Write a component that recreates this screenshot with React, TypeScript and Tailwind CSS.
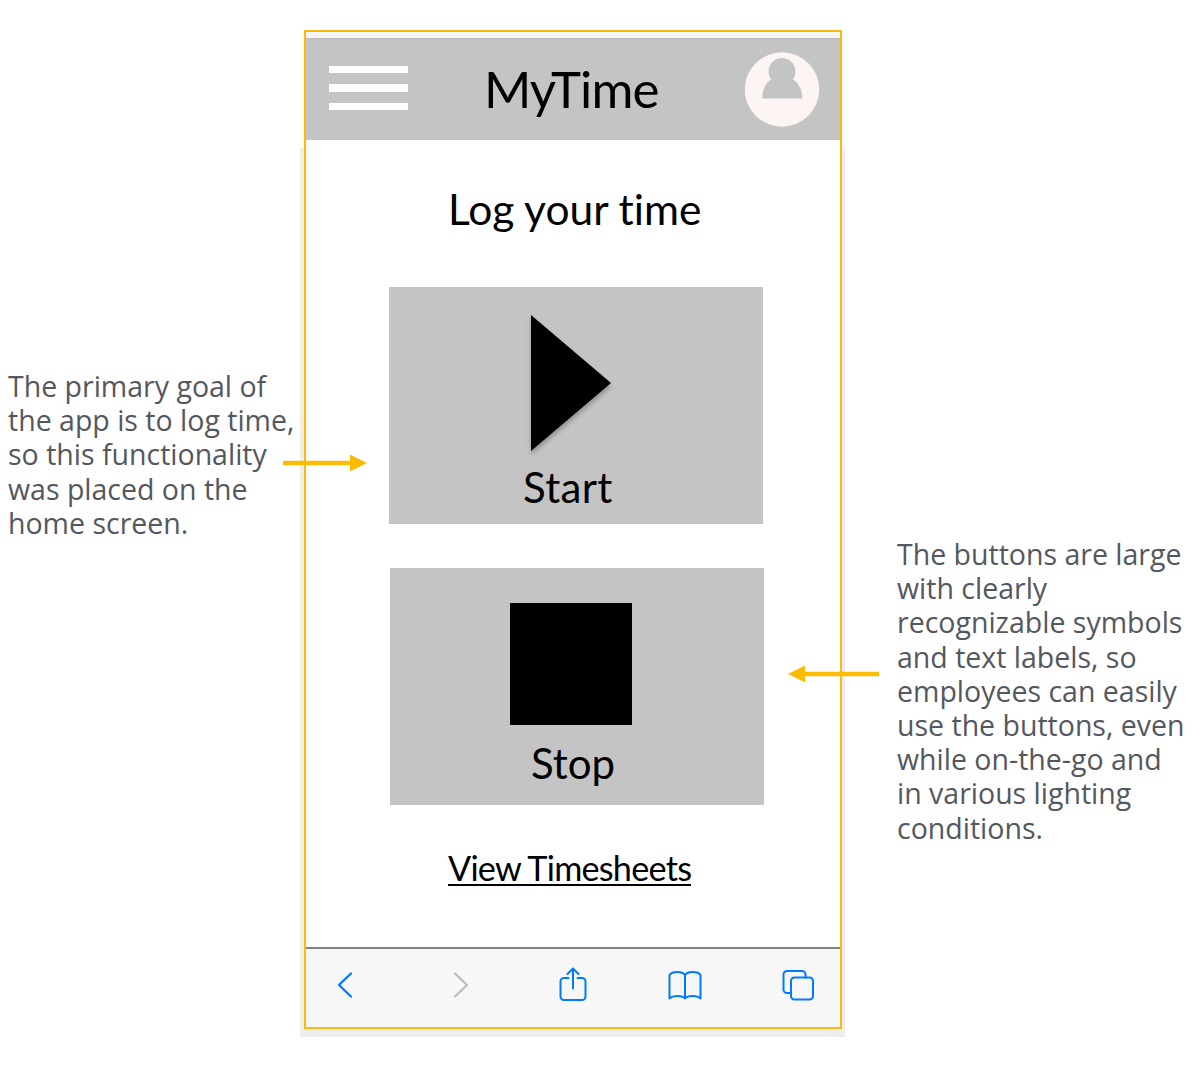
import type { ReactNode } from "react";

function Annotation({ lines }: { lines: string[] }) {
  return (
    <p className="font-['Open_Sans',sans-serif] text-[28.5px] leading-[34.2px] whitespace-nowrap text-[#54585e]">
      {lines.map((line) => (
        <span key={line} className="block">{line}</span>
      ))}
    </p>
  );
}

function Arrow({ className, flip = false }: { className: string; flip?: boolean }) {
  return (
    <svg className={`absolute z-10 ${className}`} width={flip ? 91 : 84} height="18" viewBox={flip ? "0 0 91 18" : "0 0 84 18"} fill="#fbbc04">
      {flip ? <path d="M0 9 17 .5v6.2H91v4.6H17v6.2z" /> : <path d="M84 9 67 .5v6.2H0v4.6h67v6.2z" />}
    </svg>
  );
}

function Header() {
  return (
    <header className="flex h-[102px] items-center border-t border-[#bababa] bg-[#c4c4c4] pr-[20px] pl-[23px]">
      <div className="mb-[3px] flex w-[79px] flex-col gap-[11px]">
        <span className="h-[7.5px] bg-white" />
        <span className="h-[7.5px] bg-white" />
        <span className="h-[7.5px] bg-white" />
      </div>
      <h1 className="mb-[1px] ml-[76px] text-[51px] leading-[60px] tracking-[-0.9px]">MyTime</h1>
      <svg className="ml-auto" width="75" height="75" viewBox="0 0 75 75">
        <circle cx="37" cy="37.5" r="37.2" fill="#fdf5f4" />
        <circle cx="37" cy="19.5" r="13.5" fill="#c4c4c4" />
        <path d="M17.3 46.500C17.300 36 22.500 28.500 27.500 27 L46.500 27C51.500 28.500 57.300 36 57.300 46.500z" fill="#c4c4c4" />
      </svg>
    </header>
  );
}

function ActionButton({ label, children, className }: { label: string; children: ReactNode; className: string }) {
  return (
    <button className={`flex h-[237px] w-[374px] flex-col items-start bg-[#c4c4c4] text-[42px] leading-[50px] ${className}`}>
      {children}
      <span>{label}</span>
    </button>
  );
}

function BrowserBar() {
  const line = { fill: "none", stroke: "#007aff", strokeWidth: 2, strokeLinecap: "round", strokeLinejoin: "round" } as const;
  return (
    <nav className="mt-auto flex h-[80px] items-start border-t-2 border-[#808080] bg-[#f7f7f7] pt-[17px] pl-[31px]">
      <svg width="18" height="38" viewBox="0 0 18 38" {...line} strokeWidth={2.3}><path d="M14 7.500 2 19 14 30.500" /></svg>
      <svg className="ml-[97px]" width="18" height="38" viewBox="0 0 18 38" {...line} stroke="#bcbcbc" strokeWidth={2.2}><path d="M3 7.500 15 19 3 30.500" /></svg>
      <svg className="ml-[89px]" width="28" height="38" viewBox="0 0 28 38" {...line}>
        <path d="M9.500 12H5a3.500 3.500 0 0 0-3.500 3.500v15A3.500 3.500 0 0 0 5 34h18a3.500 3.500 0 0 0 3.500-3.500v-15A3.500 3.500 0 0 0 23 12h-4.500M14 22.500V3M8.500 8 14 2.500 19.500 8" />
      </svg>
      <svg className="ml-[81px]" width="34" height="38" viewBox="0 0 34 38" {...line}>
        <path d="M17 9c-2.500-4-13-4-15.500 0v23.500c3-3.500 13-3.500 15.500 0 2.500-3.500 12.500-3.500 15.500 0V9C30 5 19.500 5 17 9zV32.500" />
      </svg>
      <svg className="ml-[80px]" width="32" height="38" viewBox="0 0 32 38" {...line}>
        <rect x="9" y="11.500" width="22" height="22" rx="3.500" />
        <path d="M9 27H5A3.500 3.500 0 0 1 1.500 23.500V8.500A3.500 3.500 0 0 1 5 5h15a3.500 3.500 0 0 1 3.500 3.500v3" />
      </svg>
    </nav>
  );
}

export default function App() {
  return (
    <main className="relative flex h-[1071px] w-[1200px] items-start overflow-hidden bg-white">
      <div className="w-[304px] pt-[369px] pl-[8px]">
        <Annotation lines={["The primary goal of", "the app is to log time,", "so this functionality", "was placed on the", "home screen."]} />
      </div>
      <div className="relative mt-[30px] h-[999px] w-[538px] shrink-0">
        <div className="absolute top-[118px] -right-[3px] -bottom-[8px] -left-[4px] bg-[#ededed]" />
        <section className="relative flex h-full w-full flex-col border-2 border-[#fbb912] bg-white font-['Lato','Open_Sans',sans-serif] text-black">
          <div className="h-[6px] bg-[#f7f7f7]" />
          <Header />
          <h2 className="mt-[44px] ml-[142px] text-[42.5px] leading-[50px] tracking-[-0.02px] whitespace-nowrap [font-variant-ligatures:none]">Log your time</h2>
          <ActionButton label="Start" className="mt-[53px] ml-[83px] pl-[134px] tracking-[0.3px]">
            <svg className="mt-[28px] ml-[5px] overflow-visible drop-shadow-[0_4px_2px_rgba(0,0,0,0.25)]" width="86" height="147" viewBox="0 0 86 147">
              <path d="M3 0 83 68 3 136z" />
            </svg>
          </ActionButton>
          <ActionButton label="Stop" className="mt-[44px] ml-[84px] pl-[141px]">
            <div className="mt-[35px] mb-[13px] -ml-[21px] h-[122px] w-[122px] bg-black" />
          </ActionButton>
          <a className="mt-[47px] ml-[142px] w-[243px] border-b-2 border-black text-[34.2px] leading-[32px] tracking-[-0.75px] whitespace-nowrap">View Timesheets</a>
          <BrowserBar />
        </section>
      </div>
      <div className="pt-[537px] pl-[55px]">
        <Annotation lines={["The buttons are large", "with clearly", "recognizable symbols", "and text labels, so", "employees can easily", "use the buttons, even", "while on-the-go and", "in various lighting", "conditions."]} />
      </div>
      <Arrow className="top-[454px] left-[283px]" />
      <Arrow flip className="top-[665px] left-[788px]" />
    </main>
  );
}
